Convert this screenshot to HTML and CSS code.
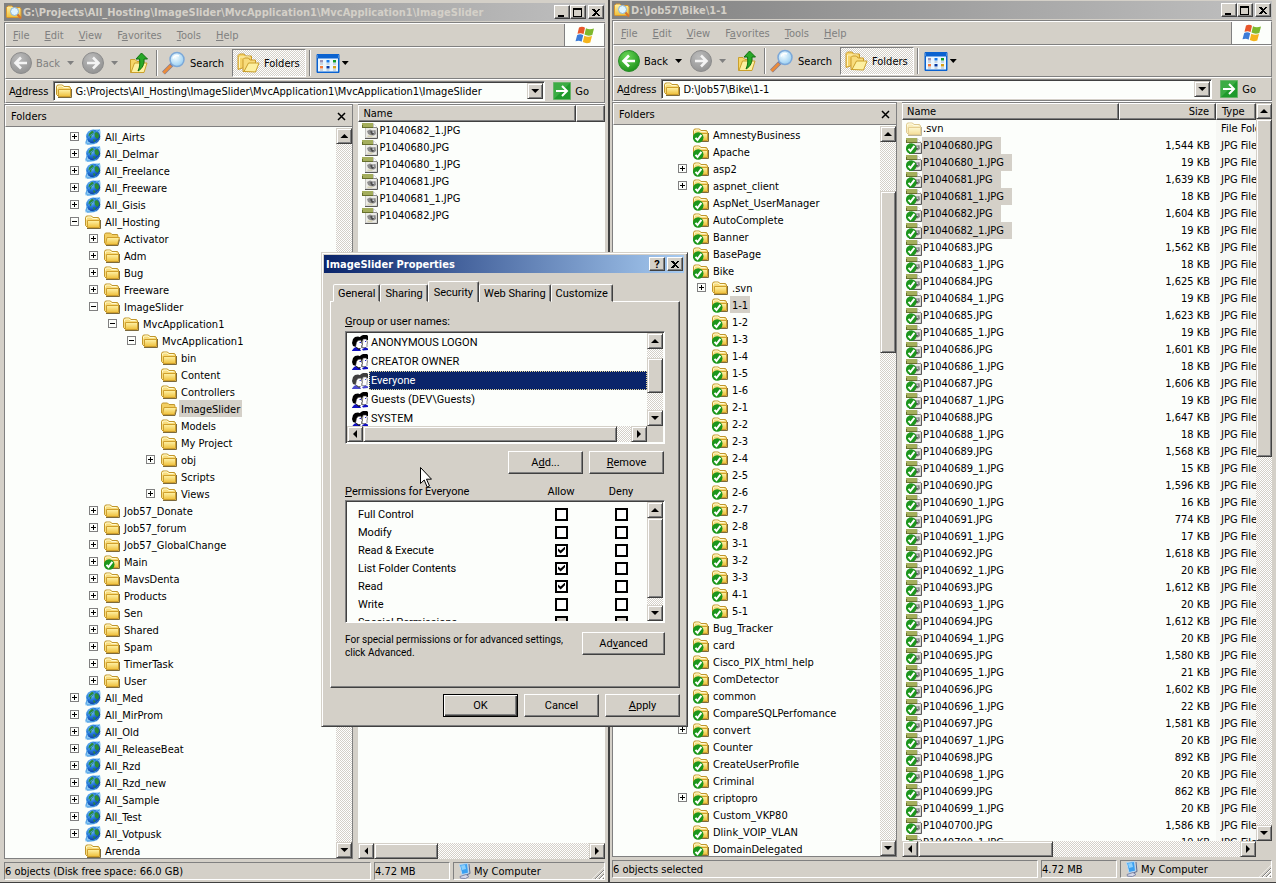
FILE: index.html
```html
<!DOCTYPE html>
<html lang="en">
<head>
<meta charset="utf-8">
<title>ImageSlider Properties</title>
<link rel="stylesheet" href="styles.css">
</head>
<body>
<svg class="sprite" aria-hidden="true">
  <defs>
    <linearGradient id="gFolder" x1="0" y1="0" x2="0" y2="1"><stop offset="0" stop-color="#fff3a8"/><stop offset="1" stop-color="#eebf3a"/></linearGradient>
    <radialGradient id="gGlobe" cx=".35" cy=".3" r=".8"><stop offset="0" stop-color="#8cd0fa"/><stop offset=".45" stop-color="#2478dc"/><stop offset="1" stop-color="#082f8c"/></radialGradient>
    <radialGradient id="gGreen" cx=".4" cy=".3" r=".8"><stop offset="0" stop-color="#6cd858"/><stop offset="1" stop-color="#148a14"/></radialGradient>
    <radialGradient id="gGray" cx=".4" cy=".3" r=".8"><stop offset="0" stop-color="#bcbcbc"/><stop offset="1" stop-color="#8e8e8e"/></radialGradient>
    <radialGradient id="gLens" cx=".4" cy=".35" r=".8"><stop offset="0" stop-color="#f4fdff"/><stop offset="1" stop-color="#86c4ee"/></radialGradient>
  </defs>
  <symbol id="i-folder" viewBox="0 0 16 16">
    <path d="M.5 11.500V3.500L1.500 2h5L8 3.500h5.500L14.500 5v8H2z" fill="#f8dc7c" stroke="#c0962c"/>
    <path d="M2.500 6.500h12v7h-12z" fill="url(#gFolder)" stroke="#cf9f2c"/>
    <path d="M2 14.500h13.500V6" fill="none" stroke="#7c6a3c"/>
    <path d="M1.500 5.500V4l1-1h3.500l1.500 1.500h5" fill="none" stroke="#fffad0"/>
  </symbol>
  <symbol id="i-open" viewBox="0 0 16 16">
    <path d="M.5 12V3.500L1.500 2h5L8 3.500h5.500l.5 2V13H2z" fill="#f3cf62" stroke="#c0962c"/>
    <path d="M3 6.500h12.500l-2 7h-12z" fill="url(#gFolder)" stroke="#cf9f2c"/>
    <path d="M2 14.500h12l1.500-6" fill="none" stroke="#7c6a3c"/>
  </symbol>
  <symbol id="i-pale" viewBox="0 0 16 16">
    <g opacity=".5"><use href="#i-folder"/></g>
  </symbol>
  <symbol id="i-tick" viewBox="0 0 16 16">
    <circle cx="5.200" cy="10.500" r="5.300" fill="#1c961c"/>
    <path d="M2.500 10.800l2 2.200L8.400 7.800" fill="none" stroke="#fff" stroke-width="2"/>
  </symbol>
  <symbol id="i-folder-ok" viewBox="0 0 16 16"><use href="#i-folder"/><use href="#i-tick"/></symbol>
  <symbol id="i-globe" viewBox="0 0 16 16">
    <path d="M.5 15.500L1.500 11 .8 6 3 2.500 7 .5l8-.2.6 3-.4 7-3 4-4 1.200-3-.3z" fill="#8cc8f2"/>
    <circle cx="8.300" cy="7.600" r="6.900" fill="url(#gGlobe)"/>
    <path d="M4 4.500L7 1.800l2 1.200-.5 2L6.500 6.500 6 9.500 3.500 7z M10 2.500l3 1.500 1.300 3-1.800 3-2.500-2-.5-3z M8 10l2.500 1L9 13.500z" fill="#2c8c34"/>
    <path d="M1 14.500C.5 11 4 5.500 14.500 1M2 15c6 .5 11-2 13-6" fill="none" stroke="#3a94e4"/>
  </symbol>
  <symbol id="i-jpg" viewBox="0 0 16 16">
    <path d="M3.500 .5h7.500l4 4v10.500H3.500z" fill="#ececE8" stroke="#c4c4c0"/>
    <path d="M11 .5v4h4" fill="#fff" stroke="#8c8c8c"/>
    <path d="M15.500 5v10.500H3" fill="none" stroke="#585858"/>
    <path d="M0 0h11v5H0z" fill="#a4ae5c"/><path d="M0 4.500h11M.5 2v3" stroke="#66702c" fill="none"/>
    <path d="M5 8l3-1.500 3 1 2.500-.5.5 4-2 1.500H9L6 11z" fill="#8c8c8c"/><path d="M8 8.500l2-.5 2 3-2 1z" fill="#484848"/><path d="M5.500 12.500h5v1.500h-5z" fill="#d8d4b4"/><path d="M10.500 8.500h1.500v1.500h-1.500z" fill="#c8ccd4"/>
  </symbol>
  <symbol id="i-jpg-ok" viewBox="0 0 16 16"><use href="#i-jpg"/><use href="#i-tick"/></symbol>
  <symbol id="i-users" viewBox="0 0 16 16">
    <path d="M7 3l2-2 2-1h4l1 1v4h-5L9 8H7z" fill="#000"/>
    <path d="M11 4h3.500l.5 2 .5 2-.5 1v2.500l-1 1H10z" fill="#fff" stroke="#333" stroke-width=".6"/>
    <path d="M0 8l1-4 2-2 3-.5 3 1 .5 2L6 6 4.500 9 4 12l-3-1z" fill="#000"/>
    <path d="M4.500 7.500L6 5.500l3-.5.5 3 .8 1.500-.8 1v2l-1 1H6L3.500 12z" fill="#fff" stroke="#333" stroke-width=".6"/>
    <path d="M7.500 7.500H9M13 6.500h1" stroke="#2020d0"/>
    <path d="M0 15.500L2 13l2-1 2 2h2l1 2H0zM10 14l3.500-1.500 2.500 1V15l-5 .5z" fill="#1010c0"/>
    <path d="M4.500 12.500l2 1.500h1.500" stroke="#000" fill="none"/>
  </symbol>
  <symbol id="i-explorer" viewBox="0 0 16 16">
    <path d="M.5 13V3.500L2 2h4L7.500 3.500H14L15 5v8.500H1z" fill="url(#gFolder)" stroke="#d9962c"/>
    <circle cx="8.500" cy="7.500" r="4" fill="#dff4ff" stroke="#8ab4d8"/>
    <path d="M11.500 10.500L15 14.500" stroke="#d8742c" stroke-width="2"/>
  </symbol>
  <symbol id="i-back" viewBox="0 0 22 22">
    <circle cx="11" cy="11" r="10.500" fill="url(#gGreen)" stroke="#2c8c2c"/>
    <path d="M17 11H6M11 5.500L5.500 11l5.500 5.500" fill="none" stroke="#fff" stroke-width="2.600"/>
  </symbol>
  <symbol id="i-back-off" viewBox="0 0 22 22">
    <circle cx="11" cy="11" r="10.500" fill="url(#gGray)" stroke="#8c8c8c"/>
    <path d="M17 11H6M11 5.500L5.500 11l5.500 5.500" fill="none" stroke="#f4f4f4" stroke-width="2.600"/>
  </symbol>
  <symbol id="i-fwd-off" viewBox="0 0 22 22">
    <circle cx="11" cy="11" r="10.500" fill="url(#gGray)" stroke="#8c8c8c"/>
    <path d="M5 11h11M11 5.500l5.500 5.500-5.500 5.500" fill="none" stroke="#f4f4f4" stroke-width="2.600"/>
  </symbol>
  <symbol id="i-up" viewBox="0 0 20 22">
    <path d="M1.500 20.500V7.500H6l2 2h7V19z" fill="#f6d668" stroke="#caa02c"/>
    <path d="M2 20.500l3.500-9.500H18l-3 9.500z" fill="#fdf0a0" stroke="#caa02c"/>
    <path d="M12.500 1l6 6h-3.500c.5 5-1.500 9.500-6 12 2-4 2-8 1.500-12H7z" fill="#28a828" stroke="#107010"/>
  </symbol>
  <symbol id="i-search" viewBox="0 0 24 24">
    <path d="M1.500 22L10 13.500" stroke="#7c7c9c" stroke-width="4"/><path d="M1.500 22L9 14.500" stroke="#ea8c3c" stroke-width="3"/>
    <circle cx="15" cy="8.500" r="7" fill="url(#gLens)" stroke="#7ca8d8" stroke-width="1.500"/>
    <path d="M11 7.500c1-3 4-3.500 6-2.500" fill="none" stroke="#fff" stroke-width="1.500"/>
  </symbol>
  <symbol id="i-folders" viewBox="0 0 22 20">
    <path d="M.5 16.500V2.500L2 1h4.500l1.500 2h6V12z" fill="#f6d468" stroke="#c99a2c"/>
    <path d="M2 15V4h10" stroke="#fff6c0" fill="none"/>
    <path d="M5.500 18.500V6.500L7 5h4l1.500 2H18v11z" fill="#f8dc7c" stroke="#c99a2c"/>
    <path d="M6.500 18.500L11 10h10.500L18 19z" fill="#fdf0a0" stroke="#caa02c"/>
  </symbol>
  <symbol id="i-views" viewBox="0 0 24 19">
    <path d="M1 .5h22v18H1z" fill="#eaf6ff" stroke="#0a62d0"/><path d="M1.500 1h21v3.500h-21z" fill="#0a62d0"/><path d="M1.500 4v14h21V4" fill="none" stroke="#0a62d0"/>
    <path d="M4 6h3v2.500H4z" fill="#9a94b8"/><path d="M10.500 6h3v2.500h-3z" fill="#1878e8"/><path d="M17 6h3v2.500h-3z" fill="#109c28"/>
    <path d="M4 12h3v2.500H4z" fill="#f47838"/><path d="M10.500 12h3v2.500h-3z" fill="#0838a0"/><path d="M17 12h3v2.500h-3z" fill="#d8a018"/>
    <path d="M4 10h3M10.500 10h3M17 10h3M4 16h3M10.500 16h3M17 16h3" stroke="#a8b4c4"/>
  </symbol>
  <symbol id="i-go" viewBox="0 0 18 18">
    <path d="M.5 .5h17v17H.5z" fill="#1f9a2c" stroke="#68b468"/><path d="M1 17V1h16z" fill="#3cac44"/>
    <path d="M3 9h11M9 4l5 5-5 5" fill="none" stroke="#fff" stroke-width="2"/>
  </symbol>
  <symbol id="i-flag" viewBox="0 0 20 18">
    <path d="M4 1.500c2.500-1.200 4.500-.8 6 .3L8.500 8.300C7 7 5 6.800 2.500 7.800z" fill="#e8562a"/>
    <path d="M11 2.300c2.500 1.300 5 1.200 8 .2L17.300 9c-3 1.200-5.500.8-7.800-.4z" fill="#7cb82c"/>
    <path d="M2.200 9c2.500-1.200 4.500-.8 6 .3l-1.600 6.500C5 14.500 3 14.300.5 15.300z" fill="#3c7cd8"/>
    <path d="M9.300 9.800c2.500 1.300 5 1.200 7.700.2l-1.700 6.500c-3 1.200-5.200.8-7.500-.4z" fill="#f4b41c"/>
  </symbol>
  <symbol id="i-computer" viewBox="0 0 14 16">
    <path d="M1.500 1.500L9.500 .5l1 9.500L4 11.500z" fill="#3aa0f0" stroke="#b8d8f4"/><path d="M3 2.500l4-.5 1 4-4 1z" fill="#8cd0fc"/>
    <path d="M11 1l1 9.500-4 1.500" fill="none" stroke="#5c6c94"/><path d="M2 13.500l6-2 3 2-3.500 2-5-.3z" fill="#d4d8e8" stroke="#8088a8"/>
  </symbol>
</svg>

<main class="desktop">
  <section class="window window-left">
    <header class="titlebar titlebar-inactive">
      <svg class="ic"><use href="#i-explorer"/></svg>
      <h1 class="title">G:\Projects\All_Hosting\ImageSlider\MvcApplication1\MvcApplication1\ImageSlider</h1>
      <div class="caption">
        <button class="cap" aria-label="Minimize"><svg viewBox="0 0 10 9"><path d="M1 7h6v2H1z"/></svg></button>
        <button class="cap" aria-label="Maximize"><svg viewBox="0 0 10 9"><path d="M0 0h9v9H0zM1 2v6h7V2z" fill-rule="evenodd"/></svg></button>
        <button class="cap cap-close" aria-label="Close"><svg viewBox="0 0 10 9"><path d="M1 1h2l2 2 2-2h2L6 4.500 9 8H7L5 6 3 8H1l3-3.500z"/></svg></button>
      </div>
    </header>
    <div class="bands">
      <div class="band menubar">
        <nav class="menus">
          <button><u>F</u>ile</button><button><u>E</u>dit</button><button><u>V</u>iew</button><button>F<u>a</u>vorites</button><button><u>T</u>ools</button><button><u>H</u>elp</button>
        </nav>
        <div class="brand"><svg class="flag"><use href="#i-flag"/></svg></div>
      </div>
      <div class="band toolbar">
        <button class="tool tool-off" disabled><svg class="ic22"><use href="#i-back-off"/></svg>Back<i class="drop"></i></button>
        <button class="tool tool-off tool-fwd" disabled aria-label="Forward"><svg class="ic22"><use href="#i-fwd-off"/></svg><i class="drop"></i></button>
        <button class="tool tool-up" aria-label="Up"><svg class="icup"><use href="#i-up"/></svg></button>
        <span class="sep"></span>
        <button class="tool tool-search"><svg class="ic24"><use href="#i-search"/></svg>Search</button>
        <button class="tool tool-pressed"><svg class="icfolders"><use href="#i-folders"/></svg>Folders</button>
        <span class="sep"></span>
        <button class="tool tool-views" aria-label="Views"><svg class="icviews"><use href="#i-views"/></svg><i class="drop"></i></button>
      </div>
      <div class="band addressbar">
        <label for="addr1">A<u>d</u>dress</label>
        <div class="combo"><svg class="ic"><use href="#i-folder"/></svg><input id="addr1" type="text" value="G:\Projects\All_Hosting\ImageSlider\MvcApplication1\MvcApplication1\ImageSlider"><button class="sb down" aria-label="Show addresses"></button></div>
        <button class="go"><svg class="ic18"><use href="#i-go"/></svg>Go</button>
      </div>
    </div>
    <div class="content">
      <aside class="pane tree-pane">
        <div class="pane-head"><h2>Folders</h2><button class="x" aria-label="Close folders"><svg viewBox="0 0 9 9"><path d="M1 1l7 7M8 1L1 8"/></svg></button></div>
        <div class="pane-body">
          <ul class="tree" id="tree1"></ul>
          <div class="vscroll"><button class="sb up" aria-label="Scroll up"></button><span class="track"></span><button class="sb down" aria-label="Scroll down"></button></div>
        </div>
      </aside>
      <div class="pane list-pane">
        <div class="list-area">
          <table class="files">
            <colgroup><col class="col-name"><col></colgroup>
            <thead><tr><th>Name</th><th></th></tr></thead>
            <tbody id="files1"></tbody>
          </table>
        </div>
        <div class="hscroll"><button class="sb left" aria-label="Scroll left"></button><span class="thumb" style="flex-grow:62"></span><span class="gap" style="flex-grow:153"></span><button class="sb right" aria-label="Scroll right"></button></div>
      </div>
    </div>
    <footer class="status"><span class="cell cell-main">6 objects (Disk free space: 66.0 GB)</span><span class="cell cell-size">4.72 MB</span><span class="cell cell-zone"><svg class="iccomp"><use href="#i-computer"/></svg>My Computer<i class="grip"></i></span></footer>
  </section>

  <section class="window window-right">
    <header class="titlebar titlebar-inactive">
      <svg class="ic"><use href="#i-explorer"/></svg>
      <h1 class="title">D:\Job57\Bike\1-1</h1>
      <div class="caption">
        <button class="cap" aria-label="Minimize"><svg viewBox="0 0 10 9"><path d="M1 7h6v2H1z"/></svg></button>
        <button class="cap" aria-label="Maximize"><svg viewBox="0 0 10 9"><path d="M0 0h9v9H0zM1 2v6h7V2z" fill-rule="evenodd"/></svg></button>
        <button class="cap cap-close" aria-label="Close"><svg viewBox="0 0 10 9"><path d="M1 1h2l2 2 2-2h2L6 4.500 9 8H7L5 6 3 8H1l3-3.500z"/></svg></button>
      </div>
    </header>
    <div class="bands">
      <div class="band menubar">
        <nav class="menus">
          <button><u>F</u>ile</button><button><u>E</u>dit</button><button><u>V</u>iew</button><button>F<u>a</u>vorites</button><button><u>T</u>ools</button><button><u>H</u>elp</button>
        </nav>
        <div class="brand"><svg class="flag"><use href="#i-flag"/></svg></div>
      </div>
      <div class="band toolbar">
        <button class="tool"><svg class="ic22"><use href="#i-back"/></svg>Back<i class="drop"></i></button>
        <button class="tool tool-off tool-fwd" disabled aria-label="Forward"><svg class="ic22"><use href="#i-fwd-off"/></svg><i class="drop"></i></button>
        <button class="tool tool-up" aria-label="Up"><svg class="icup"><use href="#i-up"/></svg></button>
        <span class="sep"></span>
        <button class="tool tool-search"><svg class="ic24"><use href="#i-search"/></svg>Search</button>
        <button class="tool tool-pressed"><svg class="icfolders"><use href="#i-folders"/></svg>Folders</button>
        <span class="sep"></span>
        <button class="tool tool-views" aria-label="Views"><svg class="icviews"><use href="#i-views"/></svg><i class="drop"></i></button>
      </div>
      <div class="band addressbar">
        <label for="addr2">A<u>d</u>dress</label>
        <div class="combo"><svg class="ic"><use href="#i-folder"/></svg><input id="addr2" type="text" value="D:\Job57\Bike\1-1"><button class="sb down" aria-label="Show addresses"></button></div>
        <button class="go"><svg class="ic18"><use href="#i-go"/></svg>Go</button>
      </div>
    </div>
    <div class="content">
      <aside class="pane tree-pane">
        <div class="pane-head"><h2>Folders</h2><button class="x" aria-label="Close folders"><svg viewBox="0 0 9 9"><path d="M1 1l7 7M8 1L1 8"/></svg></button></div>
        <div class="pane-body">
          <ul class="tree" id="tree2"></ul>
          <div class="vscroll"><button class="sb up" aria-label="Scroll up"></button><span class="gap" style="flex-grow:49"></span><span class="thumb" style="flex-grow:161"></span><span class="gap" style="flex-grow:489"></span><button class="sb down" aria-label="Scroll down"></button></div>
        </div>
      </aside>
      <div class="pane list-pane">
        <div class="list-cols">
          <div class="list-area">
            <table class="files">
              <colgroup><col><col class="col-size"><col class="col-type"></colgroup>
              <thead><tr><th>Name</th><th class="num">Size</th><th class="type">Type</th></tr></thead>
              <tbody id="files2"></tbody>
            </table>
          </div>
          <div class="vscroll"><button class="sb up" aria-label="Scroll up"></button><span class="thumb" style="flex-grow:338"></span><span class="gap" style="flex-grow:370"></span><button class="sb down" aria-label="Scroll down"></button></div>
        </div>
        <div class="hscroll"><button class="sb left" aria-label="Scroll left"></button><span class="thumb" style="flex-grow:134"></span><span class="gap" style="flex-grow:189"></span><button class="sb right" aria-label="Scroll right"></button><span class="corner"></span></div>
      </div>
    </div>
    <footer class="status"><span class="cell cell-main">6 objects selected</span><span class="cell cell-size">4.72 MB</span><span class="cell cell-zone"><svg class="iccomp"><use href="#i-computer"/></svg>My Computer<i class="grip"></i></span></footer>
  </section>

  <section class="dialog" role="dialog" aria-labelledby="dlgtitle">
    <header class="titlebar titlebar-active">
      <h1 class="title" id="dlgtitle">ImageSlider Properties</h1>
      <div class="caption">
        <button class="cap cap-help" aria-label="Help">?</button>
        <button class="cap cap-close" aria-label="Close"><svg viewBox="0 0 10 9"><path d="M1 1h2l2 2 2-2h2L6 4.500 9 8H7L5 6 3 8H1l3-3.500z"/></svg></button>
      </div>
    </header>
    <div class="tabs" role="tablist">
      <button role="tab" class="tab">General</button><button role="tab" class="tab">Sharing</button><button role="tab" class="tab tab-on" aria-selected="true">Security</button><button role="tab" class="tab">Web Sharing</button><button role="tab" class="tab">Customize</button>
    </div>
    <div class="page">
      <p id="grp"><u>G</u>roup or user names:</p>
      <div class="box users-box">
        <div class="box-main">
          <ul class="users" role="listbox" aria-labelledby="grp">
            <li role="option"><svg class="ic"><use href="#i-users"/></svg><span>ANONYMOUS LOGON</span></li>
            <li role="option"><svg class="ic"><use href="#i-users"/></svg><span>CREATOR OWNER</span></li>
            <li role="option" class="on" aria-selected="true"><svg class="ic"><use href="#i-users"/></svg><span>Everyone</span></li>
            <li role="option"><svg class="ic"><use href="#i-users"/></svg><span>Guests (DEV\Guests)</span></li>
            <li role="option"><svg class="ic"><use href="#i-users"/></svg><span>SYSTEM</span></li>
          </ul>
          <div class="vscroll"><button class="sb up" aria-label="Scroll up"></button><span class="gap" style="flex-grow:9"></span><span class="thumb" style="flex-grow:34"></span><span class="gap" style="flex-grow:18"></span><button class="sb down" aria-label="Scroll down"></button></div>
        </div>
        <div class="hscroll"><button class="sb left" aria-label="Scroll left"></button><span class="thumb" style="flex-grow:254"></span><span class="gap" style="flex-grow:14"></span><button class="sb right" aria-label="Scroll right"></button><span class="corner"></span></div>
      </div>
      <div class="actions"><button class="btn">A<u>d</u>d...</button><button class="btn"><u>R</u>emove</button></div>
      <div class="perm-head"><span id="permname"><u>P</u>ermissions for Everyone</span><span>Allow</span><span>Deny</span></div>
      <div class="box perm-box">
        <div class="perm-view">
          <table class="perms" aria-labelledby="permname"><tbody id="perms"></tbody></table>
        </div>
        <div class="vscroll"><button class="sb up" aria-label="Scroll up"></button><span class="thumb" style="flex-grow:81"></span><span class="gap" style="flex-grow:7"></span><button class="sb down" aria-label="Scroll down"></button></div>
      </div>
      <div class="advanced"><p>For special permissions or for advanced settings, click Advanced.</p><button class="btn btn-wide">Ad<u>v</u>anced</button></div>
    </div>
    <div class="buttons"><button class="btn btn-default">OK</button><button class="btn">Cancel</button><button class="btn"><u>A</u>pply</button></div>
    <svg class="cursor" viewBox="0 0 12 21"><path d="M.5 .5v16l3.700-3.500 3 7 2.300-1-3-6.800h5z" fill="#fff" stroke="#000"/></svg>
  </section>
</main>
<script src="app.js"></script>
</body>
</html>
```
FILE: styles.css
```css
:root {
  --face: #d4d0c8;
  --paper: #fcfefb;
  --dark: #404040;
  --mid: #808080;
  --ui: "DejaVu Sans Condensed", "DejaVu Sans", "Noto Sans", sans-serif;
  --dlg: Roboto, "Liberation Sans", Arial, sans-serif;
}
* { box-sizing: border-box; }
body { margin: 0; height: 100vh; overflow: hidden; background: var(--face); color: #000; font: 11px/13px var(--ui); }
button, input { font: inherit; color: inherit; margin: 0; padding: 0; border: 0; background: none; border-radius: 0; }
h1, h2, p, ul { margin: 0; padding: 0; font: inherit; list-style: none; }
i { font-style: normal; }
svg { display: block; flex: none; }
.sprite { position: absolute; width: 0; height: 0; }
.ic { width: 16px; height: 16px; }
.ic18 { width: 18px; height: 18px; }
.ic22 { width: 22px; height: 22px; }
.ic24 { width: 24px; height: 24px; }
.icup { width: 20px; height: 22px; }
.icfolders { width: 23px; height: 20px; }
.icviews { width: 24px; height: 19px; }
.iccomp { width: 14px; height: 16px; }

.desktop { position: relative; height: 100%; display: grid; grid-template-columns: 610fr 666fr; }
.window { min-width: 0; min-height: 0; display: flex; flex-direction: column; background: var(--face); border-bottom: 1px solid var(--dark); }
.window-left { padding: 3px 3px 2px 4px; border-right: 2px solid var(--dark); }
.window-right { padding: 1px 4px 4px 2px; }

.titlebar { height: 18px; flex: none; display: flex; align-items: center; gap: 1px; padding: 0 1px 0 2px; }
.titlebar-inactive { background: linear-gradient(90deg, #808080, #c0c0c0); color: var(--face); margin-bottom: 1px; }
.titlebar-active { background: linear-gradient(90deg, #0a246a, #a6caf0); color: #fff; }
.title { flex: 1; min-width: 0; font-weight: bold; white-space: nowrap; overflow: hidden; }
.caption { display: flex; }
.cap { width: 16px; height: 14px; display: grid; place-items: center; background: var(--face); border: 1px solid; border-color: #fff var(--dark) var(--dark) #fff; box-shadow: inset -1px -1px var(--mid); color: #000; }
.cap svg { width: 10px; height: 9px; shape-rendering: crispEdges; }
.cap-close { margin-left: 2px; }
.cap-help { font-weight: bold; line-height: 11px; }

.bands { flex: none; border: 1px solid var(--mid); border-width: 1px 0 0 1px; border-bottom: 1px solid #fff; }
.band { display: flex; align-items: center; border-top: 1px solid #fff; border-left: 1px solid #fff; border-bottom: 1px solid var(--mid); border-right: 1px solid var(--mid); }
.menubar { height: 24px; align-items: stretch; }
.menus { flex: 1; display: flex; border-right: 1px solid var(--mid); }
.menus button { padding: 0 8px 0 7px; color: var(--mid); }
.brand { width: 39px; display: grid; place-items: center; background: var(--paper); }
.flag { width: 20px; height: 18px; }
.toolbar { height: 32px; padding-left: 4px; }
.tool { height: 28px; display: flex; align-items: center; gap: 4px; }
.tool-off { color: var(--mid); }
.drop { width: 7px; height: 4px; margin-left: 3px; background: currentColor; clip-path: polygon(0 0, 100% 0, 50% 100%); }
.tool-fwd { margin-left: 8px; }
.tool-up { margin-left: 11px; }
.sep { width: 2px; height: 26px; border-left: 1px solid var(--mid); border-right: 1px solid #fff; margin: 0 4px 0 7px; }
.tool-search { gap: 4px; }
.tool-pressed { margin-left: 8px; padding: 0 5px 0 4px; border: 1px solid; border-color: var(--mid) #fff #fff var(--mid); background: repeating-conic-gradient(#fff 0 25%, var(--face) 0 50%) 0 0 / 2px 2px; }
.tool-pressed + .sep { margin: 0 5px 0 3px; }
.tool-views { gap: 0; }
.tool-views .drop { margin-left: 2px; }
.addressbar { height: 24px; padding-left: 3px; gap: 5px; }
.combo { flex: 1; min-width: 0; height: 20px; display: flex; align-items: center; background: var(--paper); border: 1px solid; border-color: var(--mid) #fff #fff var(--mid); box-shadow: inset 1px 1px var(--dark); padding: 1px 1px 1px 2px; }
.combo input { flex: 1; min-width: 0; padding: 0 3px; outline: 0; }
.combo .sb { height: 16px; }
.go { display: flex; align-items: center; gap: 4px; padding: 0 15px 0 3px; }

.sb { width: 16px; height: 16px; flex: none; display: grid; place-items: center; background: var(--face); border: 1px solid; border-color: var(--face) var(--dark) var(--dark) var(--face); box-shadow: inset 1px 1px #fff, inset -1px -1px var(--mid); }
.sb::before { content: ""; width: 8px; height: 4px; background: #000; }
.up::before { clip-path: polygon(50% 0, 100% 100%, 0 100%); }
.down::before { clip-path: polygon(0 0, 100% 0, 50% 100%); }
.left::before { width: 4px; height: 8px; clip-path: polygon(0 50%, 100% 0, 100% 100%); }
.right::before { width: 4px; height: 8px; clip-path: polygon(0 0, 100% 50%, 0 100%); }
.vscroll, .hscroll { flex: none; display: flex; background: repeating-conic-gradient(#fff 0 25%, var(--face) 0 50%) 0 0 / 2px 2px; }
.vscroll { width: 16px; flex-direction: column; }
.hscroll { height: 16px; }
.track { flex: 1; }
.gap, .thumb { flex: 1 1 0; }
.thumb { background: var(--face); border: 1px solid; border-color: var(--face) var(--dark) var(--dark) var(--face); box-shadow: inset 1px 1px #fff, inset -1px -1px var(--mid); }
.corner { width: 16px; background: var(--face); }

.content { flex: 1; min-height: 0; display: grid; gap: 5px; }
.window-left .content { grid-template-columns: 350fr 247fr; }
.window-right .content { grid-template-columns: 285fr 370fr; }
.pane { min-width: 0; min-height: 0; display: flex; flex-direction: column; border-top: 1px solid var(--mid); }
.tree-pane { border: 1px solid var(--mid); background: var(--paper); }
.pane-head { height: 22px; flex: none; display: flex; align-items: center; justify-content: space-between; padding: 0 6px 0 5px; background: var(--face); border-bottom: 1px solid var(--mid); border-top: 1px solid #fff; border-left: 1px solid #fff; }
.x svg { width: 9px; height: 9px; fill: none; stroke: #000; stroke-width: 1.5; }
.pane-body { flex: 1; min-height: 0; display: flex; padding-top: 1px; }
.tree { flex: 1; min-width: 0; overflow: hidden; padding-left: 65px; }
.node { height: 17px; display: flex; align-items: center; white-space: nowrap; }
.level-1 { padding-left: 19px; }
.level-2 { padding-left: 38px; }
.level-3 { padding-left: 57px; }
.level-4 { padding-left: 76px; }
.node .ic { margin: 0 2px 0 6px; }
.node span { padding: 3px 2px 1px; }
.node.on span { background: var(--face); }
.exp { width: 9px; height: 9px; flex: none; border: 1px solid var(--mid); background: linear-gradient(#000, #000) center / 5px 1px no-repeat; }
.exp.plus { background: linear-gradient(#000, #000) center / 5px 1px no-repeat, linear-gradient(#000, #000) center / 1px 5px no-repeat; }
.exp-none { width: 9px; flex: none; }

.list-pane { background: var(--paper); }
.list-cols { flex: 1; min-height: 0; display: flex; }
.list-area { flex: 1; min-width: 0; min-height: 0; overflow: hidden; }
.files { width: 100%; table-layout: fixed; border-collapse: separate; border-spacing: 0; }
.col-name { width: 218px; }
.col-size { width: 97px; }
.col-type { width: 40px; }
.files th { height: 17px; padding: 0 4px; text-align: left; font-weight: normal; background: var(--face); border: 1px solid; border-color: #fff var(--dark) var(--dark) #fff; box-shadow: inset -1px -1px var(--mid); line-height: 13px; }
.files td { height: 17px; padding: 0; white-space: nowrap; overflow: hidden; }
.files .num { text-align: right; padding-right: 6px; }
.files .type { padding-left: 5px; padding-right: 0; }
.files td.type { background: #f7f8f5; }
.file { display: flex; align-items: center; height: 17px; padding-left: 4px; }
.file span { padding: 2px 8px 2px 1px; }
.file.on span { background: var(--face); }

.status { flex: none; display: flex; gap: 3px; height: 18px; margin-top: 3px; }
.cell { display: flex; align-items: center; border: 1px solid; border-color: var(--mid) #fff #fff var(--mid); white-space: nowrap; }
.cell-main { flex: 1; min-width: 0; }
.cell-size { width: 76px; }
.cell-zone { width: 152px; padding-left: 4px; gap: 2px; }
.grip { width: 12px; height: 12px; margin: 4px 0 0 auto; background: repeating-linear-gradient(135deg, var(--face) 0 1px, var(--mid) 1px 2px, #fff 2px 3px); clip-path: polygon(100% 0, 100% 100%, 0 100%); }

.dialog { position: absolute; left: 321px; top: 252px; width: 367px; display: flex; flex-direction: column; padding: 2px 3px 9px 2px; background: var(--face); border: 1px solid; border-color: var(--face) var(--dark) var(--dark) var(--face); box-shadow: inset 1px 1px #fff, inset -1px -1px var(--mid); font-family: var(--dlg); }
.titlebar-active .title { font-family: var(--ui); }
.tabs { display: flex; align-items: flex-end; height: 20px; margin: 8px 0 0 9px; position: relative; z-index: 1; top: 1px; }
.tab { height: 18px; padding: 0 4px; border: 1px solid; border-color: #fff var(--dark) transparent #fff; box-shadow: inset -1px 0 var(--mid); border-radius: 2px 2px 0 0; background: var(--face); }
.tab-on { height: 21px; padding: 0 5px; border-bottom: 0; }
.page { margin: 0 4px 0 6px; padding: 13px 14px 28px 14px; border: 1px solid; border-color: #fff var(--dark) var(--dark) #fff; box-shadow: inset -1px -1px var(--mid); }
.box { background: var(--paper); border: 1px solid; border-color: var(--mid) #fff #fff var(--mid); box-shadow: inset 1px 1px var(--dark); padding: 1px; }
.users-box { margin-top: 3px; height: 113px; display: flex; flex-direction: column; }
.box-main { display: flex; flex: 1; min-height: 0; }
.users { flex: 1; min-width: 0; overflow: hidden; padding-left: 5px; }
.users li { height: 19px; display: flex; align-items: center; gap: 1px; }
.users span { flex: 1; height: 19px; padding: 3px 2px; }
.users .on span { background: #0a246a; color: #fff; outline: 1px dotted #e8d898; outline-offset: -1px; }
.users .on .ic { opacity: .75; }
.actions { display: flex; justify-content: flex-end; gap: 6px; margin-top: 7px; padding-right: 1px; }
.btn { width: 75px; height: 23px; background: var(--face); border: 1px solid; border-color: #fff var(--dark) var(--dark) #fff; box-shadow: inset -1px -1px var(--mid); }
.btn-wide { width: 83px; flex: none; }
.btn-default { border-color: #000; box-shadow: inset 1px 1px #fff, inset -1px -1px var(--dark), inset -2px -2px var(--mid); }
.perm-head { display: grid; grid-template-columns: 1fr 60px 60px; padding-right: 14px; margin-top: 11px; }
.perm-head span + span { text-align: center; }
.perm-box { height: 123px; margin-top: 2px; display: flex; }
.perm-view { flex: 1; min-width: 0; overflow: hidden; padding-top: 3px; }
.perms { width: 100%; table-layout: fixed; border-collapse: collapse; }
.perms th { height: 18px; padding: 0 0 0 11px; text-align: left; font-weight: normal; }
.perms td { width: 60px; height: 18px; padding: 0 0 0 28px; }
.perms input { appearance: none; display: block; width: 13px; height: 13px; margin: 0; border: 2px solid #000; background: #fff; }
.perms input:disabled { background: var(--face); }
.perms input:checked::before { content: ""; display: block; width: 7px; height: 7px; margin: 1px; background: #000; clip-path: polygon(0 28%, 38% 58%, 100% 0, 100% 40%, 38% 100%, 0 66%); }
.advanced { display: flex; justify-content: space-between; margin-top: 9px; }
.advanced p { width: 236px; padding-top: 1px; font-size: 10px; }
.buttons { display: flex; justify-content: flex-end; gap: 6px; margin: 6px 4px 0 0; }
.cursor { position: absolute; left: 98px; top: 214px; width: 12px; height: 21px; }
```
FILE: app.js
```js
const icon = name => `<svg class="ic" aria-hidden="true"><use href="#i-${name}"/></svg>`;

// Each tree line: level, expander (+, - or .), icon, label; a trailing * marks the selected node.
function drawTree(id, text) {
  document.getElementById(id).innerHTML = text.trim().split("\n").map(line => {
    const [level, mark, pic, ...rest] = line.trim().split(" ");
    let label = rest.join(" ");
    const on = label.endsWith("*");
    if (on) label = label.slice(0, -1);
    const exp = mark === "." ? '<i class="exp-none"></i>'
      : `<button class="exp ${mark === "+" ? "plus" : ""}" aria-label="Toggle ${label}"></button>`;
    return `<li class="node level-${level} ${on ? "on" : ""}">${exp}${icon(pic)}<span>${label}</span></li>`;
  }).join("");
}

drawTree("tree1", `
0 + globe All_Airts
0 + globe All_Delmar
0 + globe All_Freelance
0 + globe All_Freeware
0 + globe All_Gisis
0 - folder All_Hosting
1 + open Activator
1 + folder Adm
1 + folder Bug
1 + folder Freeware
1 - folder ImageSlider
2 - folder MvcApplication1
3 - folder MvcApplication1
4 . folder bin
4 . folder Content
4 . folder Controllers
4 . open ImageSlider*
4 . folder Models
4 . folder My Project
3 + folder obj
4 . folder Scripts
3 + folder Views
1 + folder Job57_Donate
1 + folder Job57_forum
1 + folder Job57_GlobalChange
1 + folder-ok Main
1 + folder MavsDenta
1 + folder Products
1 + folder Sen
1 + folder Shared
1 + folder Spam
1 + folder TimerTask
1 + folder User
0 + globe All_Med
0 + globe All_MirProm
0 + globe All_Old
0 + globe All_ReleaseBeat
0 + globe All_Rzd
0 + globe All_Rzd_new
0 + globe All_Sample
0 + globe All_Test
0 + globe All_Votpusk
0 . folder Arenda`.replace("3 + folder obj", "4 + folder obj").replace("3 + folder Views", "4 + folder Views"));

drawTree("tree2", `
0 . folder-ok AmnestyBusiness
0 . folder-ok Apache
0 + folder-ok asp2
0 + folder-ok aspnet_client
0 . folder-ok AspNet_UserManager
0 . folder-ok AutoComplete
0 . folder-ok Banner
0 . folder-ok BasePage
0 - folder-ok Bike
1 + folder .svn
1 . folder-ok 1-1*
1 . folder-ok 1-2
1 . folder-ok 1-3
1 . folder-ok 1-4
1 . folder-ok 1-5
1 . folder-ok 1-6
1 . folder-ok 2-1
1 . folder-ok 2-2
1 . folder-ok 2-3
1 . folder-ok 2-4
1 . folder-ok 2-5
1 . folder-ok 2-6
1 . folder-ok 2-7
1 . folder-ok 2-8
1 . folder-ok 3-1
1 . folder-ok 3-2
1 . folder-ok 3-3
1 . folder-ok 4-1
1 . folder-ok 5-1
0 + folder-ok Bug_Tracker
0 . folder-ok card
0 . folder-ok Cisco_PIX_html_help
0 . folder-ok ComDetector
0 + folder-ok common
0 . folder-ok CompareSQLPerfomance
0 + folder-ok convert
0 . folder-ok Counter
0 . folder-ok CreateUserProfile
0 . folder-ok Criminal
0 + folder-ok criptopro
0 . folder-ok Custom_VKP80
0 . folder-ok Dlink_VOIP_VLAN
0 . folder-ok DomainDelegated`);

const cell = (pic, name, on) => `<div class="file ${on ? "on" : ""}">${icon(pic)}<span>${name}</span></div>`;

document.getElementById("files1").innerHTML =
  ["682_1", "680", "680_1", "681", "681_1", "682"]
    .map(n => `<tr><td>${cell("jpg", `P1040${n}.JPG`)}</td><td></td></tr>`).join("");

// Sizes in KB, one pair per photo: the full picture and its _1 thumbnail.
const sizes = ["1,544 19", "1,639 18", "1,604 19", "1,562 18", "1,625 19", "1,623 19", "1,601 18",
  "1,606 19", "1,647 18", "1,568 15", "1,596 16", "774 17", "1,618 20", "1,612 20", "1,612 20",
  "1,580 21", "1,602 22", "1,581 20", "892 20", "862 20", "1,586 19"];
document.getElementById("files2").innerHTML =
  `<tr><td>${cell("pale", ".svn")}</td><td></td><td class="type">File Folder</td></tr>` +
  sizes.map((pair, i) => pair.split(" ").map((kb, j) =>
    `<tr><td>${cell("jpg-ok", `P1040${680 + i}${j ? "_1" : ""}.JPG`, i < 3)}</td><td class="num">${kb} KB</td><td class="type">JPG File</td></tr>`
  ).join("")).join("");

const perms = [["Full Control"], ["Modify"], ["Read &amp; Execute", 1], ["List Folder Contents", 1],
  ["Read", 1], ["Write"], ["Special Permissions", 0, 1]];
document.getElementById("perms").innerHTML = perms.map(([name, allow, off]) => {
  const box = (kind, checked) =>
    `<td><input type="checkbox" aria-label="${kind} ${name}" ${checked ? "checked" : ""} ${off ? "disabled" : ""}></td>`;
  return `<tr><th scope="row">${name}</th>${box("Allow", allow)}${box("Deny")}</tr>`;
}).join("");
```
